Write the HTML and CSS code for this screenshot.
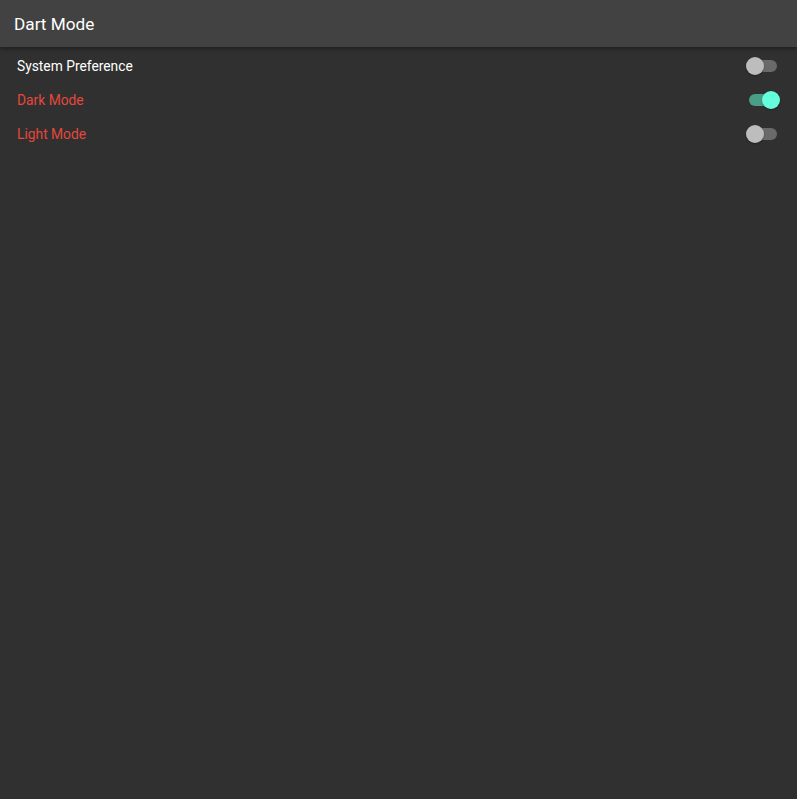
FILE: index.html
```html
<!DOCTYPE html>
<html>
<head>
<meta charset="utf-8">
<link rel="stylesheet" href="styles.css">
</head>
<body>
<header class="appbar"><h1 class="title">Dart Mode</h1></header>
<main class="list">
  <div class="row">
    <span class="label">System Preference</span>
    <span class="switch"><span class="track"></span><span class="thumb"></span></span>
  </div>
  <div class="row">
    <span class="label red">Dark Mode</span>
    <span class="switch on"><span class="track"></span><span class="thumb"></span></span>
  </div>
  <div class="row">
    <span class="label red">Light Mode</span>
    <span class="switch"><span class="track"></span><span class="thumb"></span></span>
  </div>
</main>
</body>
</html>
```

FILE: styles.css
```css
html, body {
  margin: 0;
  padding: 0;
  height: 100%;
  background: #303030;
  font-family: Roboto, "Liberation Sans", sans-serif;
}
.appbar {
  height: 47px;
  background: #424242;
  display: flex;
  align-items: center;
  padding: 0 14px;
  box-shadow: 0 2px 4px rgba(0,0,0,0.35);
  position: relative;
}
.title {
  margin: 0;
  font-size: 17.2px;
  font-weight: 400;
  color: #ffffff;
}
.list {
  padding: 2px 17px 0 17px;
}
.row {
  height: 34px;
  display: flex;
  align-items: center;
  justify-content: space-between;
}
.label {
  font-size: 13.8px;
  color: #ffffff;
}
.label.red {
  color: #e4483b;
}
.switch {
  position: relative;
  width: 34px;
  height: 18px;
  display: inline-block;
}
.track {
  position: absolute;
  left: 3px;
  top: 3px;
  width: 28px;
  height: 12px;
  border-radius: 6px;
  background: #6a6a6a;
}
.thumb {
  position: absolute;
  left: 0;
  top: 0;
  width: 18px;
  height: 18px;
  border-radius: 50%;
  background: #bdbdbd;
  box-shadow: 0 1px 2px rgba(0,0,0,0.3);
}
.switch.on .track {
  background: #4a9d86;
}
.switch.on .thumb {
  left: 16px;
  background: #64ffda;
}
```
